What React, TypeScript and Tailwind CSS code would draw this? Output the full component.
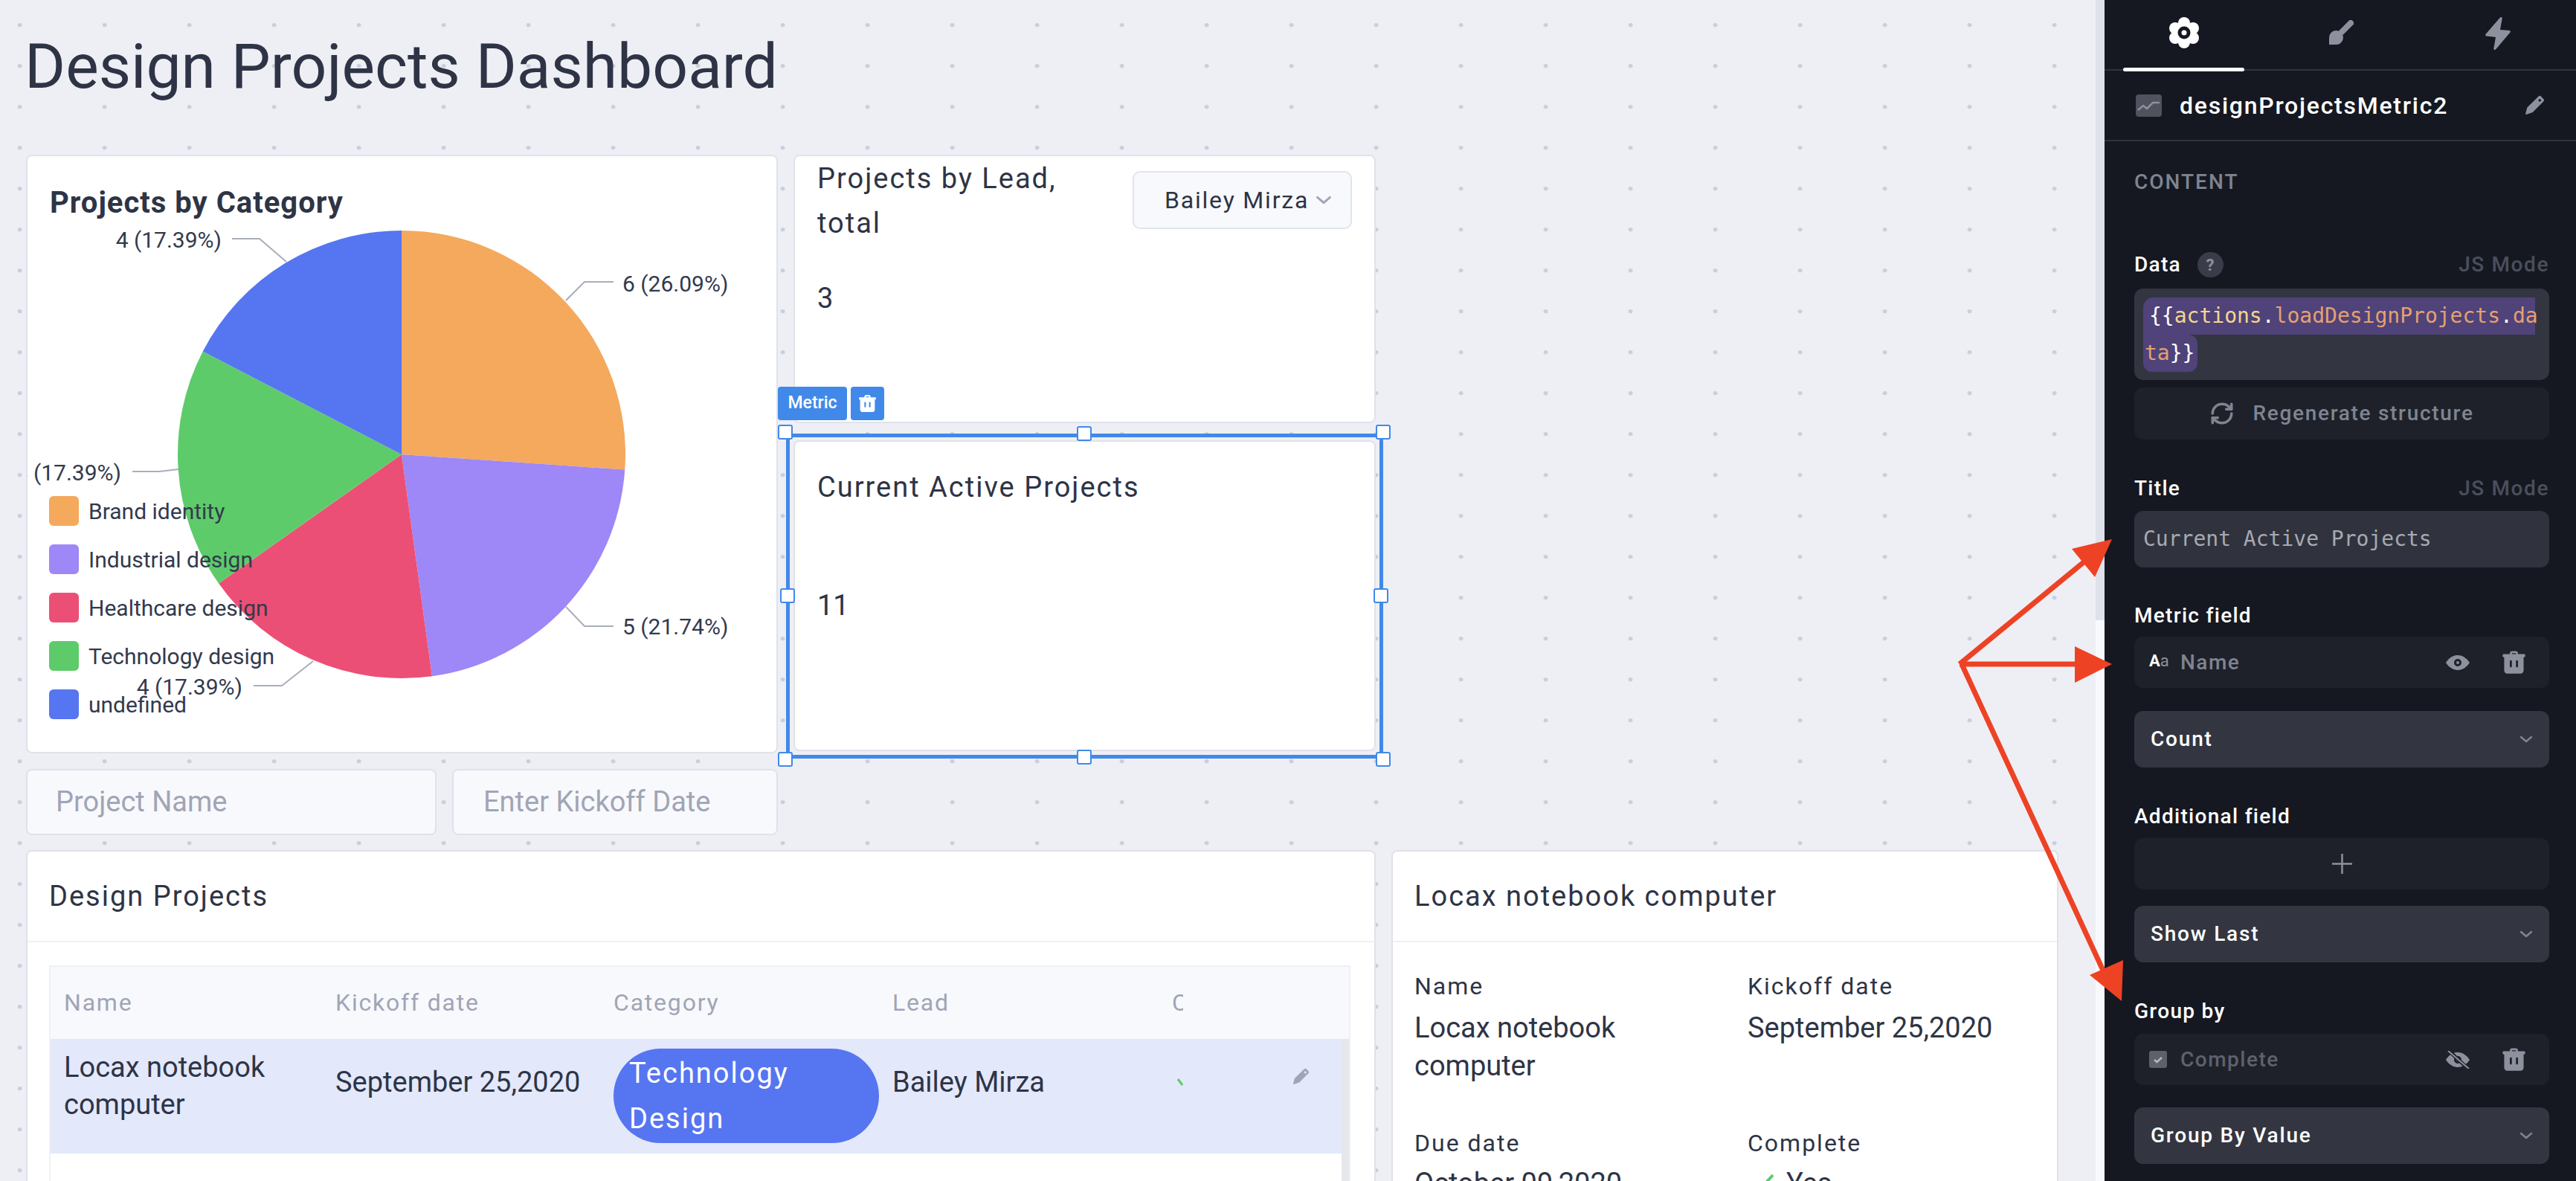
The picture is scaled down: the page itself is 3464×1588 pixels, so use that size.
import { RefreshCw } from "lucide-react";

const slices = [
  { from: 0, value: 6, color: "#f4a95c" },
  { from: 6, value: 5, color: "#9e87f6" },
  { from: 11, value: 4, color: "#ec4f75" },
  { from: 15, value: 4, color: "#5ecb6a" },
  { from: 19, value: 4, color: "#5675f1" },
];

const legend = [
  { name: "Brand identity", color: "#f4a95c" },
  { name: "Industrial design", color: "#9e87f6" },
  { name: "Healthcare design", color: "#ec4f75" },
  { name: "Technology design", color: "#5ecb6a" },
  { name: "undefined", color: "#5675f1" },
];

const pieLabels = [
  { text: "6 (26.09%)", x: 837, y: 380, anchor: "start", line: "761,403 786,378 825,378" },
  { text: "5 (21.74%)", x: 837, y: 841, anchor: "start", line: "761,815 786,841 825,841" },
  { text: "4 (17.39%)", x: 326, y: 922, anchor: "end", line: "421,888 379,921 341,921" },
  { text: "4 (17.39%)", x: 163, y: 634, anchor: "end", line: "240,630 214,633 178,633" },
  { text: "4 (17.39%)", x: 298, y: 321, anchor: "end", line: "385,351 349,320 312,320" },
];

function slicePath(from: number, value: number) {
  const cx = 540;
  const cy = 610;
  const r = 301;
  const a0 = (from / 23) * Math.PI * 2;
  const a1 = ((from + value) / 23) * Math.PI * 2;
  const x0 = cx + r * Math.sin(a0);
  const y0 = cy - r * Math.cos(a0);
  const x1 = cx + r * Math.sin(a1);
  const y1 = cy - r * Math.cos(a1);
  return `M${cx} ${cy}L${x0} ${y0}A${r} ${r} 0 0 1 ${x1} ${y1}Z`;
}

function PieChart() {
  return (
    <svg viewBox="37 209 1007 801" className="absolute inset-0 h-[801px] w-[1007px]">
      {slices.map((s) => (
        <path key={s.from} d={slicePath(s.from, s.value)} fill={s.color} />
      ))}
      {pieLabels.map((l, i) => (
        <g key={i}>
          <polyline points={l.line} fill="none" stroke="#a9aebc" strokeWidth="2" />
          <text
            x={l.x}
            y={l.y + 11}
            textAnchor={l.anchor as "start" | "end"}
            fontSize="30"
            fill="#333a4d"
          >
            {l.text}
          </text>
        </g>
      ))}
    </svg>
  );
}

function Pencil({ className }: { className: string }) {
  return (
    <svg viewBox="0 0 24 24" className={className} fill="currentColor">
      <path d="M16.6 1.4a2 2 0 0 1 2.8 0l3.2 3.2a2 2 0 0 1 0 2.8L9.6 20.4 1.8 23a.7.7 0 0 1-.8-.8l2-7.6L16.6 1.4Zm1.3 2.9-1.8 1.8 2 2 1.8-1.8-2-2Z" fillRule="evenodd" />
    </svg>
  );
}

function Trash({ className }: { className: string }) {
  return (
    <svg viewBox="0 0 24 24" className={className} fill="currentColor">
      <path
        fillRule="evenodd"
        d="M8 3.5A2.5 2.5 0 0 1 10.500 1h3A2.500 2.500 0 0 1 16 3.500V4h6a1 1 0 0 1 1 1v1a1 1 0 0 1-1 1h-.5v13a3 3 0 0 1-3 3h-13a3 3 0 0 1-3-3V7H2a1 1 0 0 1-1-1V5a1 1 0 0 1 1-1h6v-.5ZM10 4h4v-.5a.5.5 0 0 0-.5-.5h-3a.5.5 0 0 0-.5.5V4Zm-1 6a1 1 0 0 0-1 1v5a1 1 0 1 0 2 0v-5a1 1 0 0 0-1-1Zm6 0a1 1 0 0 0-1 1v5a1 1 0 1 0 2 0v-5a1 1 0 0 0-1-1Z"
      />
    </svg>
  );
}

function Eye({ off }: { off?: boolean }) {
  return (
    <svg viewBox="0 0 34 24" className="h-[24px] w-[34px]" fill="currentColor">
      <path
        fillRule="evenodd"
        d="M17 2c7 0 13 5 16 10-3 5-9 10-16 10S4 17 1 12C4 7 10 2 17 2Zm0 5a5 5 0 1 0 0 10 5 5 0 0 0 0-10Zm0 3a2 2 0 1 1 0 4 2 2 0 0 1 0-4Z"
      />
      {off && <path d="M5 0 31 24" stroke="#1e2129" strokeWidth="5" />}
      {off && <path d="M4 0 32 24" stroke="currentColor" strokeWidth="2" />}
    </svg>
  );
}

function Chevron({ className }: { className: string }) {
  return (
    <svg viewBox="0 0 18 10" className={className} fill="none" stroke="currentColor" strokeWidth="2.500" strokeLinecap="round" strokeLinejoin="round">
      <path d="M2 2l7 6 7-6" />
    </svg>
  );
}

function Handle({ className }: { className: string }) {
  return <div className={`absolute h-[20px] w-[20px] rounded-[3px] border-2 border-[#4189e9] bg-white ${className}`} />;
}

function MetricTitle({ children }: { children: React.ReactNode }) {
  return <div className="text-[38px] leading-[60px] tracking-[2px] text-[#2e3445]">{children}</div>;
}

function FieldLabel({ children, jsMode }: { children: React.ReactNode; jsMode?: boolean }) {
  return (
    <div className="flex h-[40px] items-center justify-between">
      <div className="flex items-center gap-[22px] text-[28px] font-medium tracking-[1.3px] text-white">{children}</div>
      {jsMode && <div className="text-[28px] font-medium tracking-[1.6px] text-[#4b4f5c]">JS Mode</div>}
    </div>
  );
}

function SelectBox({ text, className }: { text: string; className: string }) {
  return (
    <div className={`flex h-[76px] items-center justify-between rounded-[12px] bg-[#333641] pl-[22px] pr-[22px] ${className}`}>
      <span className="text-[28px] font-medium tracking-[1.8px] text-white">{text}</span>
      <Chevron className="h-[10px] w-[18px] text-[#7f8491]" />
    </div>
  );
}

function FieldRow({ icon, name, dim, off, className }: { icon: React.ReactNode; name: string; dim?: boolean; off?: boolean; className: string }) {
  return (
    <div className={`flex h-[69px] items-center rounded-[12px] bg-[#1e2129] pl-[20px] pr-[31px] text-[#8d919e] ${className}`}>
      <div className="w-[42px]">{icon}</div>
      <span className={`text-[28px] font-medium tracking-[1.5px] ${dim ? "text-[#5e616c]" : "text-[#7f8491]"}`}>{name}</span>
      <div className="ml-auto mr-[42px]">
        <Eye off={off} />
      </div>
      <Trash className="h-[33px] w-[33px]" />
    </div>
  );
}

function Arrows() {
  return (
    <svg viewBox="0 0 3464 1588" className="pointer-events-none absolute inset-0 h-[1588px] w-[3464px]">
      <g stroke="#ee4225" strokeWidth="7" fill="none">
        <path d="M2635 893 2808 751" />
        <path d="M2635 893H2795" />
        <path d="M2638 893 2835 1320" />
      </g>
      <g fill="#ee4225">
        <path d="M2840 725 2786 738 2817 776Z" />
        <path d="M2840 893 2790 869V918Z" />
        <path d="M2853 1346 2810 1311 2855 1291Z" />
      </g>
    </svg>
  );
}

export default function App() {
  return (
    <div className="relative flex h-[1588px] w-[3464px] overflow-hidden font-['Roboto',sans-serif]">
      {/* canvas */}
      <div className="h-full w-[2818px] overflow-hidden bg-[#eeeff5] bg-[radial-gradient(circle_at_center,#c9cddc_2.5px,transparent_3px)] bg-[size:114px_55px] bg-[position:-30.4px_6.2px] pl-[35px]">
        {/* page title */}
        <div className="-ml-[2px] h-[208px] pt-[40px] text-[84px] leading-[100px] text-[#2e3445]">Design Projects Dashboard</div>

        {/* top row */}
        <div className="flex items-start gap-[21px]">
          <div className="w-[1011px]">
            {/* pie card */}
            <div className="relative h-[805px] rounded-[8px] border-2 border-[#e0e2ea] bg-white">
              <PieChart />
              <div className="relative pl-[30px] pt-[41px] text-[40px] font-bold leading-[44px] tracking-[1px] text-[#2e3445]">Projects by Category</div>
              <div className="absolute left-[29px] top-[457px] flex flex-col gap-[25px]">
                {legend.map((l) => (
                  <div key={l.name} className="flex h-[40px] items-center gap-[13px] text-[30px] text-[#333a4d]">
                    <div className="h-[40px] w-[40px] rounded-[6px]" style={{ backgroundColor: l.color }} />
                    {l.name}
                  </div>
                ))}
              </div>
            </div>

            {/* filters */}
            <div className="mt-[21px] flex gap-[21px] text-[38px] text-[#a0a5b5]">
              <div className="flex h-[89px] w-[552px] items-center rounded-[8px] border-2 border-[#e0e2ea] bg-[#f8f9fd] pl-[38px]">Project Name</div>
              <div className="flex h-[89px] w-[438px] items-center rounded-[8px] border-2 border-[#e0e2ea] bg-[#f8f9fd] pl-[40px]">Enter Kickoff Date</div>
            </div>
          </div>

          <div className="w-[783px]">
            {/* lead metric */}
            <div className="relative h-[361px] rounded-[8px] border-2 border-[#e0e2ea] bg-white pl-[30px]">
              <div className="w-[400px]">
                <MetricTitle>Projects by Lead, total</MetricTitle>
              </div>
              <div className="mt-[46px] text-[38px] leading-[50px] text-[#2e3445]">3</div>
              <div className="absolute left-[454px] top-[20px] flex h-[78px] w-[295px] items-center rounded-[10px] border-2 border-[#e2e4ee] bg-[#f8f9fd] pl-[41px]">
                <span className="text-[32px] tracking-[1.8px] text-[#2e3445]">Bailey Mirza</span>
                <Chevron className="ml-[9px] h-[12px] w-[22px] text-[#a0a5b5]" />
              </div>
            </div>

            {/* selected metric */}
            <div className="relative mt-[23px] h-[418px] rounded-[8px] border-2 border-[#e0e2ea] bg-white pl-[30px] pt-[31px]">
              <MetricTitle>Current Active Projects</MetricTitle>
              <div className="mt-[104px] text-[38px] leading-[50px] text-[#2e3445]">11</div>

              <div className="absolute left-[-12px] top-[-11px] h-[437px] w-[803px] border-[5px] border-[#4189e9]" />
              <Handle className="left-[-23px] top-[-23px]" />
              <Handle className="left-[781px] top-[-23px]" />
              <Handle className="left-[-23px] top-[417px]" />
              <Handle className="left-[781px] top-[417px]" />
              <Handle className="left-[379px] top-[-21px]" />
              <Handle className="left-[379px] top-[414px]" />
              <Handle className="left-[-20px] top-[197px]" />
              <Handle className="left-[778px] top-[197px]" />
              <div className="absolute left-[-23px] top-[-74px] flex h-[45px] w-[93px] items-center justify-center rounded-[4px] bg-[#4189e9] text-[23px] font-medium text-white">Metric</div>
              <div className="absolute left-[75px] top-[-74px] flex h-[45px] w-[45px] items-center justify-center rounded-[4px] bg-[#4189e9] text-white">
                <Trash className="h-[25px] w-[25px]" />
              </div>
            </div>
          </div>
        </div>

        {/* bottom row */}
        <div className="mt-[20px] flex gap-[21px]">
          {/* table card */}
          <div className="h-[600px] w-[1815px] rounded-[8px] border-2 border-[#e0e2ea] bg-white">
            <div className="flex h-[122px] items-center border-b-2 border-[#eef0f4] pl-[29px] text-[38px] tracking-[2px] text-[#2e3445]">Design Projects</div>
            <div className="ml-[29px] mt-[31px] w-[1750px] border-2 border-[#f0f1f6]">
              <div className="grid h-[97px] grid-cols-[365px_374px_375px_376px_15px] items-center overflow-hidden bg-[#f8f9fd] pb-[2px] pl-[18px] text-[32px] tracking-[1.8px] text-[#a0a5b5]">
                <div>Name</div>
                <div>Kickoff date</div>
                <div>Category</div>
                <div>Lead</div>
                <div className="overflow-hidden">Complete</div>
              </div>
              <div className="flex h-[300px]">
                <div className="w-[1736px]">
                  <div className="flex h-[154px] items-start bg-[#e3e8fb] pl-[18px] text-[38px] leading-[50px] text-[#2e3445]">
                    <div className="w-[365px] pt-[13px]">
                      Locax notebook
                      <br />
                      computer
                    </div>
                    <div className="w-[374px] pt-[33px]">September 25,2020</div>
                    <div className="w-[375px] pt-[13px]">
                      <div className="h-[127px] w-[357px] rounded-[64px] bg-[#5675f1] pl-[21px] pt-[3px] text-[38px] leading-[61px] tracking-[2px] text-white">
                        Technology
                        <br />
                        Design
                      </div>
                    </div>
                    <div className="w-[376px] pt-[33px]">Bailey Mirza</div>
                    <div className="w-[15px] overflow-hidden pt-[53px]">
                      <svg viewBox="0 0 8 10" className="ml-[7px] h-[10px] w-[8px]">
                        <path d="M1 1 7 9" stroke="#5ecb6a" strokeWidth="3" />
                      </svg>
                    </div>
                    <div className="ml-[147px] pt-[39px] text-[#a0a5b5]">
                      <Pencil className="h-[23px] w-[23px]" />
                    </div>
                  </div>
                </div>
                <div className="w-[10px] bg-[#e5e7ed]" />
              </div>
            </div>
          </div>

          {/* detail card */}
          <div className="h-[600px] w-[897px] rounded-[8px] border-2 border-[#e0e2ea] bg-white">
            <div className="flex h-[122px] items-center border-b-2 border-[#eef0f4] pl-[29px] text-[38px] tracking-[2px] text-[#2e3445]">Locax notebook computer</div>
            <div className="grid grid-cols-[448px_1fr] pl-[29px] pt-[34px] text-[#2e3445]">
              <div className="h-[211px]">
                <div className="text-[32px] leading-[50px] tracking-[2px]">Name</div>
                <div className="mt-[6px] text-[38px] leading-[51px]">
                  Locax notebook
                  <br />
                  computer
                </div>
              </div>
              <div>
                <div className="text-[32px] leading-[50px] tracking-[2px]">Kickoff date</div>
                <div className="mt-[6px] text-[38px] leading-[51px]">September 25,2020</div>
              </div>
              <div>
                <div className="text-[32px] leading-[50px] tracking-[2px]">Due date</div>
                <div className="mt-[4px] text-[38px] leading-[51px]">October 09,2020</div>
              </div>
              <div>
                <div className="text-[32px] leading-[50px] tracking-[2px]">Complete</div>
                <div className="mt-[4px] flex items-center gap-[12px] text-[38px] leading-[51px]">
                  <svg viewBox="0 0 40 30" className="h-[30px] w-[40px]" fill="none" stroke="#5ecb6a" strokeWidth="4">
                    <path d="M6 16l8 9L34 3" />
                  </svg>
                  Yes
                </div>
              </div>
            </div>
          </div>
        </div>
      </div>

      {/* scrollbar */}
      <div className="flex h-full w-[12px] flex-col bg-[#f8f9fd]">
        <div className="h-[834px] bg-[#dfe2eb]" />
      </div>

      {/* settings panel */}
      <div className="h-full w-[634px] bg-[#151821]">
        {/* tabs */}
        <div className="relative flex h-[95px] border-b-2 border-[#31343e]">
          <div className="flex w-[213px] justify-center pt-[23px]">
            <svg viewBox="0 0 42 42" className="h-[42px] w-[42px]">
              <g fill="#ffffff">
                <circle cx="21" cy="8" r="8" />
                <circle cx="33" cy="15" r="8" />
                <circle cx="33" cy="28" r="8" />
                <circle cx="21" cy="34" r="8" />
                <circle cx="9" cy="28" r="8" />
                <circle cx="9" cy="15" r="8" />
                <circle cx="21" cy="21" r="14" />
              </g>
              <circle cx="21" cy="21" r="8.500" fill="#151821" />
              <circle cx="21" cy="21" r="3.500" fill="#ffffff" />
            </svg>
          </div>
          <div className="flex w-[210px] justify-center pt-[27px]">
            <svg viewBox="0 0 34 34" className="h-[34px] w-[34px]" fill="#8d919e">
              <path d="M30 4 18 16" fill="none" stroke="#8d919e" strokeWidth="8" strokeLinecap="round" />
              <path d="M1 33V24a9.500 9.500 0 1 1 9 9H1Z" />
            </svg>
          </div>
          <div className="flex w-[211px] justify-center pt-[22px]">
            <svg viewBox="0 0 34 46" className="h-[46px] w-[34px]" fill="#8d919e">
              <path d="M20 1.500c1-1.200 3-.4 2.700 1.200L20 18l12.500 1c1.200.1 1.700 1.500 1 2.400L14 44.500c-1 1.300-3 .4-2.700-1.200L14 28 1.500 26.500c-1.200-.1-1.700-1.500-1-2.400L20 1.500Z" />
            </svg>
          </div>
          <div className="absolute bottom-[-3px] left-[25px] h-[5px] w-[163px] rounded-full bg-white" />
        </div>

        {/* component name */}
        <div className="flex h-[95px] items-center border-b-2 border-[#31343e] pl-[42px]">
          <div className="flex h-[30px] w-[35px] items-center justify-center rounded-[4px] bg-[#50535e]">
            <svg viewBox="0 0 35 30" className="h-[30px] w-[35px]" fill="none" stroke="#8d919e" strokeWidth="2.500">
              <path d="M3 21l7-6 5 4 8-8h9" />
            </svg>
          </div>
          <span className="ml-[24px] text-[32px] font-medium tracking-[1.75px] text-white">designProjectsMetric2</span>
          <div className="ml-auto mr-[42px] text-[#8d919e]">
            <Pencil className="h-[27px] w-[27px]" />
          </div>
        </div>

        <div className="pl-[40px] pr-[36px]">
          <div className="mt-[15px] flex h-[80px] items-center text-[28px] font-medium tracking-[2px] text-[#7f8491]">CONTENT</div>

          {/* data */}
          <div className="mt-[51px]">
            <FieldLabel jsMode>
              Data
              <span className="flex h-[34px] w-[35px] items-center justify-center rounded-full bg-[#3a3d49] text-[22px] font-bold text-[#8d919e]">?</span>
            </FieldLabel>
          </div>
          <div className="mt-[12px] h-[123px] rounded-[12px] bg-[#333641] pl-[12px] pt-[12px] font-['DejaVu_Sans_Mono',monospace] text-[28px] leading-[50px]">
            <div className="h-[50px] w-[527px] rounded-tl-[14px] bg-[#4f437a] pl-[8px] text-white">
              {"{{"}
              <span className="text-[#f5d68d]">actions</span>.<span className="text-[#e6a06f]">loadDesignProjects</span>.<span className="text-[#e6a06f]">da</span>
            </div>
            <div className="h-[50px] w-[73px] rounded-b-[12px] rounded-tr-[12px] bg-[#4f437a] pl-[2px] text-white">
              <span className="text-[#e6a06f]">ta</span>
              {"}}"}
            </div>
          </div>
          <div className="mt-[10px] flex h-[70px] items-center justify-center gap-[24px] rounded-[12px] bg-[#1e2129] text-[28px] font-medium tracking-[1.7px] text-[#7f8491]">
            <RefreshCw className="h-[34px] w-[34px]" strokeWidth={2.5} />
            Regenerate structure
          </div>

          {/* title */}
          <div className="mt-[46px]">
            <FieldLabel jsMode>Title</FieldLabel>
          </div>
          <div className="mt-[10px] flex h-[76px] items-center rounded-[12px] bg-[#30333e] pl-[12px] font-['DejaVu_Sans_Mono',monospace] text-[28px] text-[#a7aab2]">Current Active Projects</div>

          {/* metric field */}
          <div className="mt-[45px]">
            <FieldLabel>Metric field</FieldLabel>
          </div>
          <FieldRow
            className="mt-[8px]"
            name="Name"
            icon={
              <span className="text-[22px] font-bold leading-none text-white">
                A<span className="font-normal text-[#8d919e]">a</span>
              </span>
            }
          />
          <SelectBox className="mt-[31px]" text="Count" />

          {/* additional field */}
          <div className="mt-[46px]">
            <FieldLabel>Additional field</FieldLabel>
          </div>
          <div className="mt-[9px] flex h-[69px] items-center justify-center rounded-[12px] bg-[#1e2129] text-[#8d919e]">
            <svg viewBox="0 0 27 27" className="h-[27px] w-[27px]" stroke="currentColor" strokeWidth="2.500">
              <path d="M13.500 0v27M0 13.500h27" />
            </svg>
          </div>
          <SelectBox className="mt-[22px]" text="Show Last" />

          {/* group by */}
          <div className="mt-[46px]">
            <FieldLabel>Group by</FieldLabel>
          </div>
          <FieldRow
            className="mt-[10px]"
            name="Complete"
            dim
            off
            icon={
              <div className="flex h-[23px] w-[24px] items-center justify-center rounded-[3px] bg-[#5e616c]">
                <svg viewBox="0 0 14 10" className="h-[10px] w-[14px]" fill="none" stroke="#b5b7bf" strokeWidth="2.500">
                  <path d="M2 5l3.500 3L12 2" />
                </svg>
              </div>
            }
          />
          <SelectBox className="mt-[30px]" text="Group By Value" />
        </div>
      </div>

      <Arrows />
    </div>
  );
}
